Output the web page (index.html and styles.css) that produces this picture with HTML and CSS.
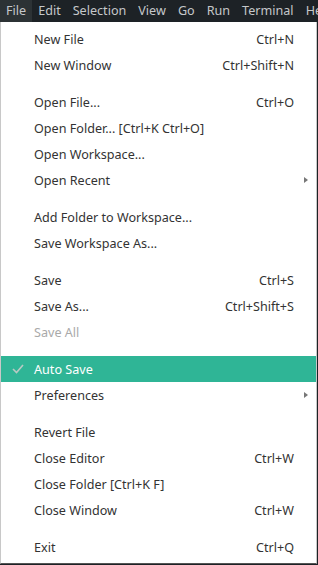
FILE: index.html
```html
<html>
<head>
<title>File menu</title>
<link rel="stylesheet" href="styles.css">
</head>
<body>
<div class="menubar">
  <span class="top active">File</span>
  <span class="top">Edit</span>
  <span class="top">Selection</span>
  <span class="top">View</span>
  <span class="top">Go</span>
  <span class="top">Run</span>
  <span class="top">Terminal</span>
  <span class="top">Help</span>
</div>
<div class="menu">
  <div class="item"><span class="label">New File</span><span class="key">Ctrl+N</span></div>
  <div class="item"><span class="label">New Window</span><span class="key">Ctrl+Shift+N</span></div>
  <div class="sep"></div>
  <div class="item"><span class="label">Open File...</span><span class="key">Ctrl+O</span></div>
  <div class="item"><span class="label">Open Folder... [Ctrl+K Ctrl+O]</span></div>
  <div class="item"><span class="label">Open Workspace...</span></div>
  <div class="item"><span class="label">Open Recent</span><span class="arrow"></span></div>
  <div class="sep"></div>
  <div class="item"><span class="label">Add Folder to Workspace...</span></div>
  <div class="item"><span class="label">Save Workspace As...</span></div>
  <div class="sep"></div>
  <div class="item"><span class="label">Save</span><span class="key">Ctrl+S</span></div>
  <div class="item"><span class="label">Save As...</span><span class="key">Ctrl+Shift+S</span></div>
  <div class="item disabled"><span class="label">Save All</span></div>
  <div class="sep"></div>
  <div class="item selected">
    <svg class="check" width="12" height="10" viewBox="0 0 12 10"><polyline points="1,5 4.5,8.5 11,1" fill="none" stroke="#b9c9c3" stroke-width="1.6"/></svg>
    <span class="label">Auto Save</span>
  </div>
  <div class="item"><span class="label">Preferences</span><span class="arrow"></span></div>
  <div class="sep"></div>
  <div class="item"><span class="label">Revert File</span></div>
  <div class="item"><span class="label">Close Editor</span><span class="key">Ctrl+W</span></div>
  <div class="item"><span class="label">Close Folder [Ctrl+K F]</span></div>
  <div class="item"><span class="label">Close Window</span><span class="key">Ctrl+W</span></div>
  <div class="sep"></div>
  <div class="item"><span class="label">Exit</span><span class="key">Ctrl+Q</span></div>
</div>
</body>
</html>
```

FILE: styles.css
```css
body {
    margin: 0;
    background: #1d2226;
    font-family: "Noto Sans", "Open Sans", sans-serif;
    font-size: 12.6px;
    overflow: hidden;
}

.menubar {
    display: flex;
    height: 22px;
    align-items: center;
    background: #1d2226;
    white-space: nowrap;
    overflow: hidden;
}

.top {
    color: #c5c8ca;
    padding: 0 6px;
    line-height: 22px;
}

.top.active {
    background: #2c3235;
}

.menu {
    width: 315px;
    background: #ffffff;
    border: 1px solid #c8c8c8;
    border-top: none;
    border-bottom-color: #555;
    padding: 4px 0 3px 0;
}

.item {
    position: relative;
    display: flex;
    align-items: center;
    height: 26px;
    padding: 0 22px 0 33px;
    color: #333;
}

.label {
    flex: 1;
    white-space: nowrap;
}

.key {
    white-space: nowrap;
}

.disabled {
    color: #a9a9a9;
}

.selected {
    background: #2fb596;
    color: #ffffff;
}

.check {
    position: absolute;
    left: 11px;
    top: 8px;
}

.arrow {
    position: absolute;
    right: 8px;
    top: 10px;
    width: 0;
    height: 0;
    border-top: 3.5px solid transparent;
    border-bottom: 3.5px solid transparent;
    border-left: 4px solid #777;
}

.sep {
    height: 11px;
}
```
